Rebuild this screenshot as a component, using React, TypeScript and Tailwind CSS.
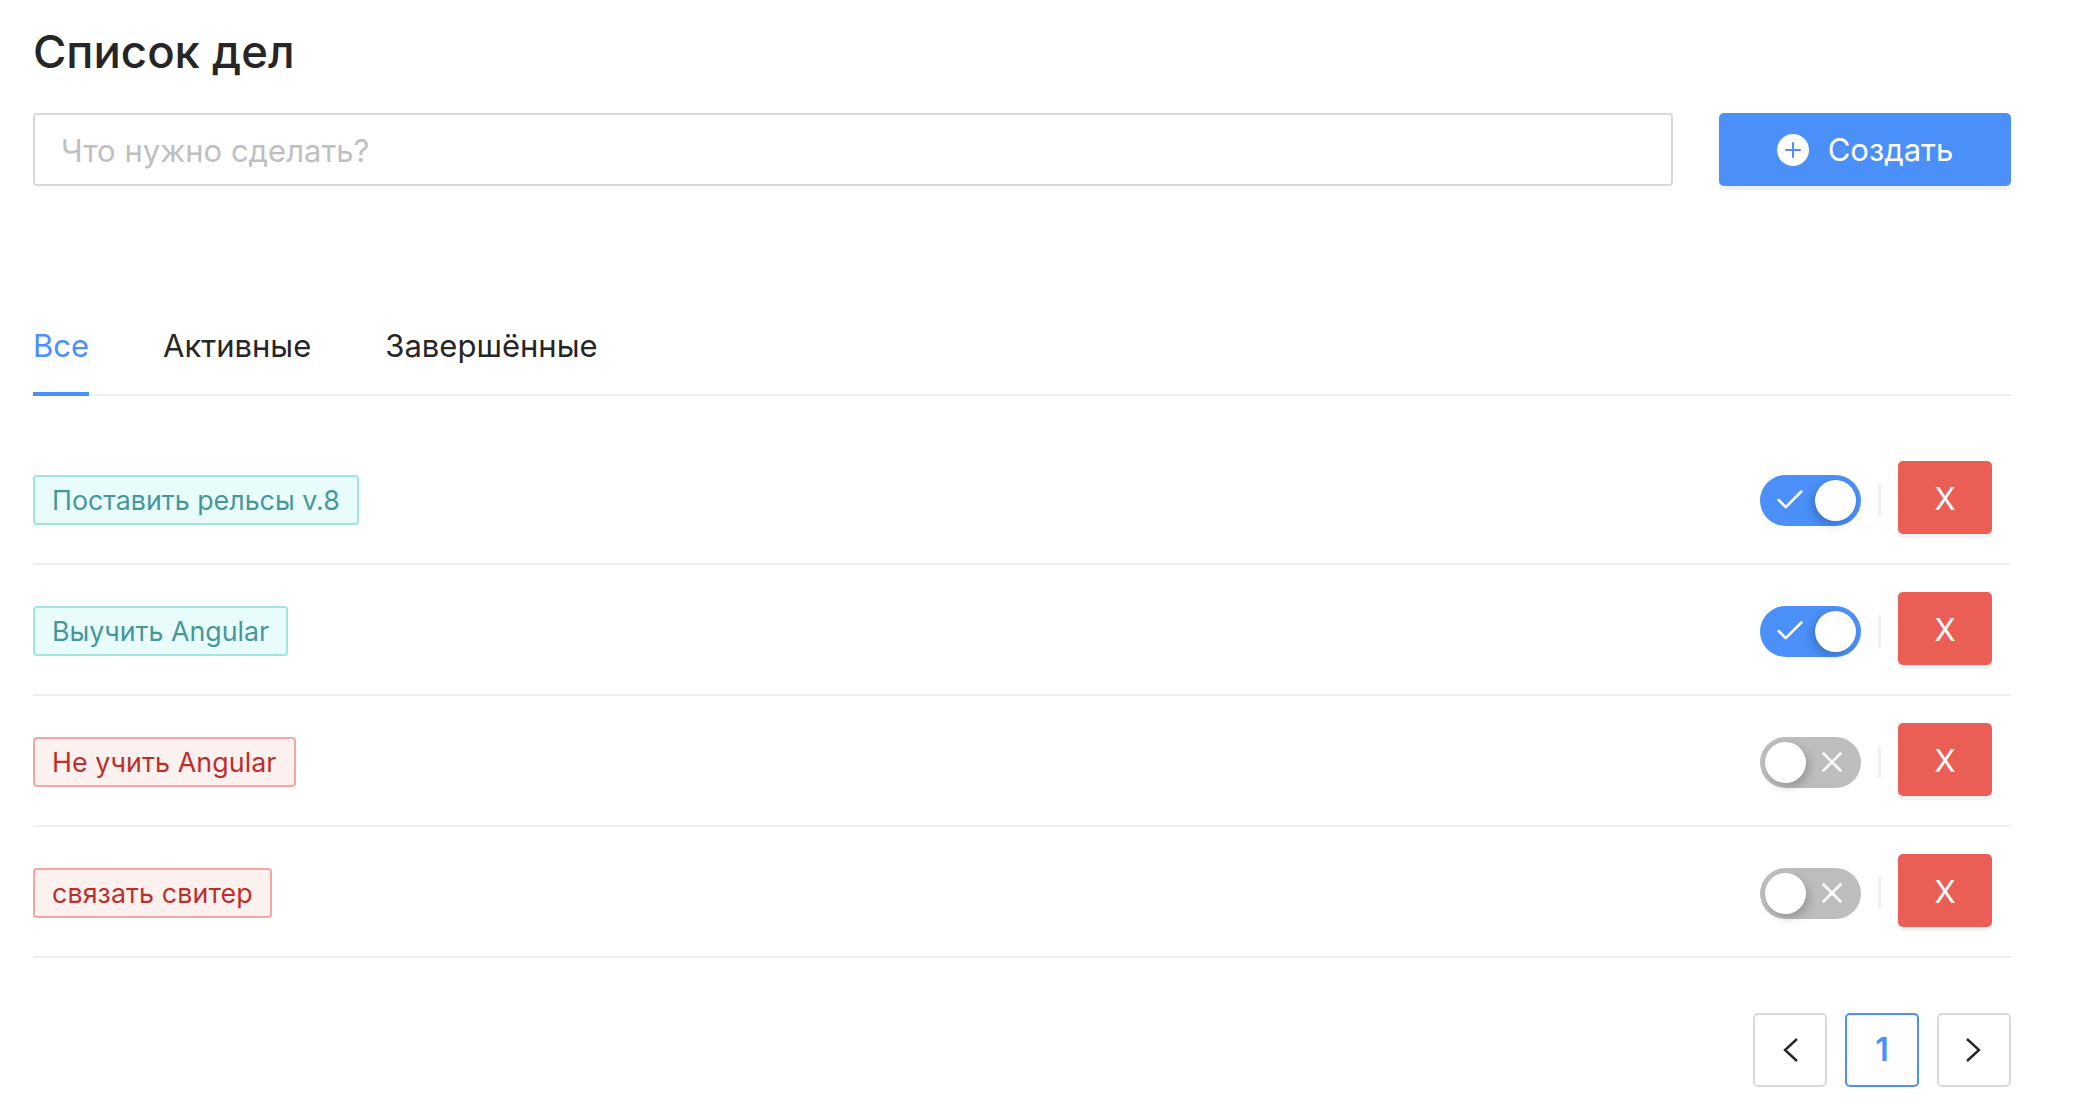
import { Check, Plus, X } from "lucide-react";

type Todo = { title: string; done: boolean };

const todos: Todo[] = [
  { title: "Поставить рельсы v.8", done: true },
  { title: "Выучить Angular", done: true },
  { title: "Не учить Angular", done: false },
  { title: "связать свитер", done: false },
];

function Toggle({ on }: { on: boolean }) {
  if (on) {
    return (
      <div className="mt-[3px] flex h-[51px] w-[101px] items-center justify-between rounded-full bg-[#4a90f8] pl-[13px] pr-[5px]">
        <Check className="size-[34px] text-white" strokeWidth={1.8} absoluteStrokeWidth />
        <div className="size-[41px] rounded-full bg-white shadow-[-3px_4px_8px_rgba(0,0,0,0.2)]" />
      </div>
    );
  }
  return (
    <div className="mt-[3px] flex h-[51px] w-[101px] items-center justify-between rounded-full bg-[#bdbdbd] pl-[5px] pr-[12px]">
      <div className="size-[41px] rounded-full bg-white shadow-[3px_4px_8px_rgba(0,0,0,0.2)]" />
      <X className="size-[34px] text-white" strokeWidth={1.8} absoluteStrokeWidth />
    </div>
  );
}

function TodoRow({ todo }: { todo: Todo }) {
  return (
    <div className="flex h-[131px] items-center justify-between border-b-2 border-[#f0f0f0] pr-[19px]">
      <span
        className={
          todo.done
            ? "mt-[3px] rounded-[4px] border-2 border-[#9fe6dc] bg-[#e8fdfb] px-[17px] text-[26.8px] leading-[46px] text-[#46979b]"
            : "mt-[3px] rounded-[4px] border-2 border-[#f4a6a0] bg-[#fdf1f0] px-[17px] text-[26.8px] leading-[46px] tracking-[0.1px] text-[#bd2f2a]"
        }
      >
        {todo.title}
      </span>
      <div className="flex items-center">
        <Toggle on={todo.done} />
        <div className="mx-[17px] mt-[3px] h-[32px] w-[3px] bg-[#f0f0f0]" />
        <button className="-mt-[2px] h-[73px] w-[94px] rounded-[5px] bg-[#eb5e55] pt-[3px] text-[31px] text-white shadow-[0_4px_0_rgba(0,0,0,0.05)]">
          X
        </button>
      </div>
    </div>
  );
}

function PageButton({ active, children }: { active?: boolean; children: React.ReactNode }) {
  return (
    <button
      className={
        active
          ? "flex size-[74px] items-center justify-center rounded-[5px] border-2 border-[#4a90f8] bg-white text-[32px] font-semibold text-[#4a90f8]"
          : "flex size-[74px] items-center justify-center rounded-[5px] border-2 border-[#d9d9d9] bg-white text-[#262626]"
      }
    >
      {children}
    </button>
  );
}

function Chevron({ d }: { d: string }) {
  return (
    <svg width="24" height="28" viewBox="0 0 24 28" fill="none" stroke="currentColor" strokeWidth="2.4">
      <path d={d} />
    </svg>
  );
}

export default function App() {
  return (
    <div className="h-[1112px] overflow-hidden bg-white pl-[33px] pr-[65px] font-['Inter',sans-serif] text-[#262626]">
      <h1 className="pt-[22px] text-[45.5px] leading-[60px] font-medium">Список дел</h1>

      <div className="mt-[31px] flex gap-[46px]">
        <input
          placeholder="Что нужно сделать?"
          className="h-[73px] flex-1 rounded-[4px] border-2 border-[#d9d9d9] px-[26px] pt-[2px] text-[31px] outline-none placeholder:text-[#bfbfbf]"
        />
        <button className="flex h-[73px] w-[292px] items-center justify-center gap-[19px] rounded-[5px] bg-[#4a90f8] pt-[1px] text-[31px] text-white shadow-[0_4px_0_rgba(0,0,0,0.05)]">
          <span className="flex size-[32px] items-center justify-center rounded-full bg-white">
            <Plus className="size-[24px] text-[#4a90f8]" strokeWidth={2} absoluteStrokeWidth />
          </span>
          Создать
        </button>
      </div>

      <div className="mt-[140px] flex gap-[74px] border-b-2 border-[#f0f0f0] text-[31px] leading-[40px]">
        <div className="-mb-[2px] border-b-4 border-[#4a90f8] pb-[26px] text-[#4a90f8]">Все</div>
        <div>Активные</div>
        <div>Завершённые</div>
      </div>

      <div className="mt-[38px]">
        {todos.map((todo) => (
          <TodoRow key={todo.title} todo={todo} />
        ))}
      </div>

      <div className="mt-[55px] flex justify-end gap-[18px]">
        <PageButton>
          <Chevron d="M19 3 L7 14 L19 25" />
        </PageButton>
        <PageButton active>1</PageButton>
        <PageButton>
          <Chevron d="M5 3 L17 14 L5 25" />
        </PageButton>
      </div>
    </div>
  );
}
